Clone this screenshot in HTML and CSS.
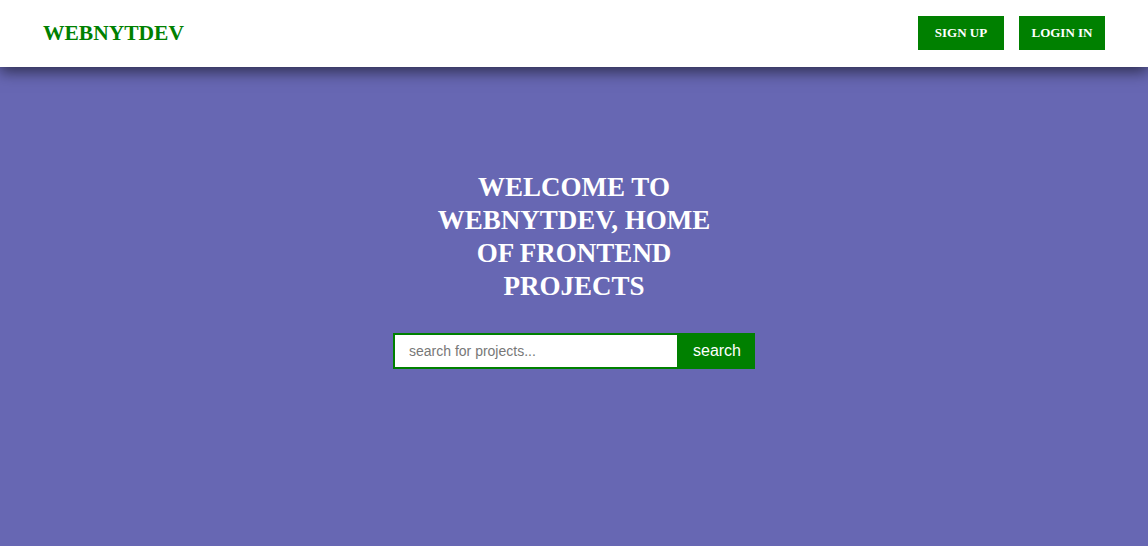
FILE: index.html
```html
<!DOCTYPE html>
<html>
<head>
<meta charset="utf-8">
<link rel="stylesheet" href="styles.css">
</head>
<body>
<header class="topbar">
  <div class="logo">WEBNYTDEV</div>
  <nav class="actions">
    <a class="btn" href="#">SIGN UP</a>
    <a class="btn" href="#">LOGIN IN</a>
  </nav>
</header>
<main class="hero">
  <h1 class="title">WELCOME TO WEBNYTDEV, HOME OF FRONTEND PROJECTS</h1>
  <form class="search">
    <input class="search-input" type="text" placeholder="search for projects...">
    <button class="search-btn" type="button">search</button>
  </form>
</main>
</body>
</html>
```

FILE: styles.css
```css
* { box-sizing: border-box; }
html, body { margin: 0; padding: 0; height: 100%; }
body {
  font-family: "Liberation Serif", "Times New Roman", serif;
  background: #6767b3;
  overflow: hidden;
}
.topbar {
  position: relative;
  z-index: 1;
  height: 67px;
  background: #fff;
  display: flex;
  align-items: flex-start;
  justify-content: space-between;
  padding: 16px 43px 0 43px;
  box-shadow: 0 5px 14px rgba(0,0,0,0.55);
}
.logo {
  color: #008000;
  font-weight: bold;
  font-size: 21.5px;
  line-height: 34px;
}
.actions { display: flex; gap: 15px; }
.btn {
  display: flex;
  align-items: center;
  justify-content: center;
  width: 86px;
  height: 34px;
  background: #008000;
  color: #fff;
  font-weight: bold;
  font-size: 13px;
  text-decoration: none;
}
.hero {
  display: flex;
  flex-direction: column;
  align-items: center;
  padding-top: 104px;
}
.title {
  margin: 0;
  width: 300px;
  text-align: center;
  color: #fff;
  font-size: 27px;
  line-height: 33px;
  font-weight: bold;
}
.search {
  display: flex;
  margin-top: 30px;
  width: 362px;
  height: 36px;
  border: 2px solid #008000;
}
.search-input {
  flex: 1;
  border: none;
  outline: none;
  padding: 0 14px;
  font-family: "Liberation Sans", Arial, sans-serif;
  font-size: 14px;
  color: #333;
  background: #fff;
}
.search-input::placeholder { color: #777; }
.search-btn {
  width: 76px;
  border: none;
  background: #008000;
  color: #fff;
  font-family: "Liberation Sans", Arial, sans-serif;
  font-size: 16px;
  padding: 0 0 0 4px;
}
```
